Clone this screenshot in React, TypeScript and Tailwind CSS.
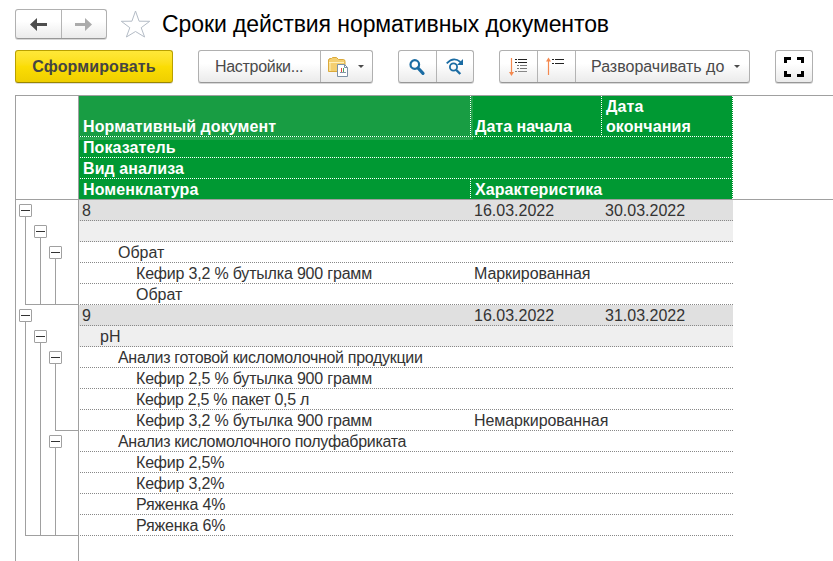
import type { ReactNode } from "react";

type Cell = "box" | "line" | "none";

interface ReportRow {
  text: string;
  level: number;
  spacing?: string;
  start?: string;
  end?: string;
  tree: [Cell, Cell, Cell];
  close?: number;
}

const TIGHT = "tracking-[-0.19px]";
const TIGHTER = "tracking-[-0.3px]";

const ROWS: ReportRow[] = [
  { text: "8", level: 0, start: "16.03.2022", end: "30.03.2022", tree: ["box", "none", "none"] },
  { text: "", level: 1, tree: ["line", "box", "none"] },
  { text: "Обрат", level: 2, tree: ["line", "line", "box"] },
  { text: "Кефир 3,2 % бутылка 900 грамм", spacing: TIGHT, level: 3, start: "Маркированная", tree: ["line", "line", "line"] },
  { text: "Обрат", level: 3, tree: ["line", "line", "line"], close: 0 },
  { text: "9", level: 0, start: "16.03.2022", end: "31.03.2022", tree: ["box", "none", "none"] },
  { text: "pH", level: 1, tree: ["line", "box", "none"] },
  { text: "Анализ готовой кисломолочной продукции", spacing: TIGHTER, level: 2, tree: ["line", "line", "box"] },
  { text: "Кефир 2,5 % бутылка 900 грамм", spacing: TIGHT, level: 3, tree: ["line", "line", "line"] },
  { text: "Кефир 2,5 % пакет 0,5 л", spacing: TIGHTER, level: 3, tree: ["line", "line", "line"] },
  { text: "Кефир 3,2 % бутылка 900 грамм", spacing: TIGHT, level: 3, start: "Немаркированная", tree: ["line", "line", "line"], close: 2 },
  { text: "Анализ кисломолочного полуфабриката", spacing: TIGHTER, level: 2, tree: ["line", "line", "box"] },
  { text: "Кефир 2,5%", spacing: TIGHT, level: 3, tree: ["line", "line", "line"] },
  { text: "Кефир 3,2%", spacing: TIGHT, level: 3, tree: ["line", "line", "line"] },
  { text: "Ряженка 4%", spacing: TIGHT, level: 3, tree: ["line", "line", "line"] },
  { text: "Ряженка 6%", spacing: TIGHT, level: 3, tree: ["line", "line", "line"], close: 0 },
];

const INDENT = ["pl-[3px]", "pl-[21px]", "pl-[39px]", "pl-[57px]"];
const FILL = ["bg-[#e0e0e0]", "bg-[#efefef]", "bg-white", "bg-white"];
const CLOSE = ["ml-[9px]", "ml-[24px]", "ml-[39px]"];

const GRAY_DOTS = "h-px shrink-0 ml-px bg-[repeating-linear-gradient(90deg,#888_0px_1px,transparent_1px_2px)]";
const WHITE_DOTS = "h-px shrink-0 ml-px bg-[repeating-linear-gradient(90deg,#fff_0px_1px,transparent_1px_2px)]";
const WHITE_DOTS_V = "w-px shrink-0 bg-[repeating-linear-gradient(180deg,#fff_0px_1px,transparent_1px_2px)]";

function Group({ className, children }: { className: string; children: ReactNode }) {
  return (
    <div
      className={`flex shrink-0 divide-x divide-[#b4b4b4] rounded-[3px] border border-[#b0b0b0] border-b-[#979797] bg-linear-to-b from-white from-40% to-[#ebebeb] shadow-[0_1px_0_#d8d8d8] ${className}`}
    >
      {children}
    </div>
  );
}

function Tool({ className, children }: { className: string; children?: ReactNode }) {
  return <button className={`flex shrink-0 items-center ${className}`}>{children}</button>;
}

function Caret() {
  return (
    <svg className="shrink-0" width="6" height="3" viewBox="0 0 6 3">
      <path d="M0 0h6L3 3z" fill="#4a4a4a" />
    </svg>
  );
}

function Toolbar() {
  return (
    <div className="flex h-[33px] pl-[15px]">
      <button className="h-[33px] w-[158px] shrink-0 rounded-[3px] border border-[#b9a000] border-b-[#9a8600] bg-linear-to-b from-[#ffe838] via-[#fbdd04] to-[#efcf00] text-center text-[16px] leading-[31px] font-bold tracking-[0.12px] text-[#444] shadow-[0_1px_0_#ddd]">
        Сформировать
      </button>
      <Group className="ml-[25px] w-[175px]">
        <Tool className="w-[122px] pl-4 text-[16px] tracking-[-0.3px] text-[#4a4a4a]">Настройки...</Tool>
        <Tool className="flex-1 gap-[8px] pl-[7px]">
          <svg width="22" height="23" viewBox="0 -1 22 23">
            <path d="M.5 15.500v-12h1v-1h2l1-1h4l2 2h5q1.500 0 1.500 2v10z" fill="#f4cf70" stroke="#dba93a" />
            <path d="M1 6.500h15" stroke="#fff0bd" />
            <path d="M2 7v8" stroke="#fae194" strokeWidth="2" />
            <path d="M9.500 8.500h7l3 3v9h-10z" fill="#fff" stroke="#7c91a5" />
            <path d="M16.500 8.500v3h3" fill="none" stroke="#7c91a5" />
            <path d="M12 16.500h6" stroke="#8496a8" />
            <path d="M13.500 12v4" stroke="#e04c42" />
            <path d="M15.500 12v4" stroke="#52a55c" />
          </svg>
          <Caret />
        </Tool>
      </Group>
      <Group className="ml-[25px] w-[76px]">
        <Tool className="w-[38px] pl-[10px]">
          <svg width="17" height="19" viewBox="0 -2 17 19" fill="none" stroke="#1b6ca3">
            <circle cx="5.800" cy="5.500" r="4.300" strokeWidth="2.200" />
            <path d="M9 9l5 5.300" strokeWidth="3.200" strokeLinecap="round" />
          </svg>
        </Tool>
        <Tool className="flex-1 pl-[9px]">
          <svg width="18" height="19" viewBox="0 -1 18 19" fill="none" stroke="#1b6ca3">
            <path d="M.7 5.300Q7.500-2 14.500 4" strokeWidth="1.700" />
            <path d="M17 1v6h-6z" fill="#1b6ca3" stroke="none" />
            <circle cx="7.500" cy="9" r="3.600" strokeWidth="1.800" />
            <path d="M10.300 12l4 4" strokeWidth="2.400" />
          </svg>
        </Tool>
      </Group>
      <Group className="ml-[25px] w-[251px]">
        <Tool className="w-[38px] pl-[9px]">
          <svg width="20" height="21" viewBox="0 -1 20 21">
            <path d="M2.500 1v15" stroke="#f4894f" strokeWidth="1.200" />
            <path d="M0 15h5l-2.500 4z" fill="#f4894f" />
            <path d="M6 2.500h2M9 2.500h9M6 5.500h2M9 5.500h9" stroke="#222" />
            <path d="M8 8.500h2M11 8.500h7M8 11.500h2M11 11.500h7" stroke="#777" />
            <path d="M6 14.500h2M9 14.500h9" stroke="#888" />
          </svg>
        </Tool>
        <Tool className="w-[38px] pl-[8px]">
          <svg width="20" height="21" viewBox="0 -1 20 21">
            <path d="M2.500 3v15" stroke="#f4894f" strokeWidth="1.200" />
            <path d="M0 4.500h5L2.500.5z" fill="#f4894f" />
            <path d="M6 2.500h2M9 2.500h9M6 6.500h2M9 6.500h9" stroke="#222" />
          </svg>
        </Tool>
        <Tool className="flex-1 gap-[10px] pl-[15px] text-[16px] whitespace-nowrap text-[#4a4a4a]">
          <span>Разворачивать до</span>
          <Caret />
        </Tool>
      </Group>
      <Group className="ml-[25px] w-[38px]">
        <Tool className="flex-1 pl-[8px]">
          <svg width="20" height="21" viewBox="0 -1 20 21" fill="none" stroke="#000" strokeWidth="3">
            <path d="M1.500 6v-4.500h5.500M13 1.500h5.500v4.500M18.500 14v4.500h-5.500M7 18.500h-5.500v-4.500" />
          </svg>
        </Tool>
      </Group>
    </div>
  );
}

function TitleBar() {
  return (
    <div className="flex h-[50px] pt-[9px] pl-[15px]">
      <Group className="h-[30px] w-[92px]">
        <Tool className="w-[46px] pl-[14px]">
          <svg width="18" height="14" viewBox="0 0 18 14">
            <path d="M0 7.500l7-6.500V6h10v3H7v5z" fill="#4d4d4d" />
          </svg>
        </Tool>
        <Tool className="flex-1 pl-[12px]">
          <svg width="18" height="14" viewBox="0 0 18 14">
            <path d="M18 7.500l-7-6.500V6H1v3h10v5z" fill="#ababab" />
          </svg>
        </Tool>
      </Group>
      <svg className="ml-[13px] shrink-0" width="32" height="30" viewBox="0 0 32 30">
        <path
          d="M15.500 2l3.600 10.200 10.600.1-8.500 6.400 3.400 9.300-9.100-5.500-9.100 5.500 3.400-9.300L1.300 12.300l10.600-.1z"
          fill="#fff"
          stroke="#b4bcc6"
        />
      </svg>
      <h1 className="ml-[10px] text-[23px] leading-[30px] tracking-[-0.08px] whitespace-nowrap text-black">
        Сроки действия нормативных документов
      </h1>
    </div>
  );
}

function HeaderLine({ text, second }: { text: string; second?: string }) {
  return (
    <div className="flex h-5">
      <div className="w-[391px] pl-1 leading-[21px]">{text}</div>
      {second && (
        <>
          <div className={WHITE_DOTS_V} />
          <div className="pl-[4px] leading-[21px]">{second}</div>
        </>
      )}
    </div>
  );
}

function ReportHeader() {
  return (
    <div className="flex h-[105px] border-y border-[#a0a0a0]">
      <div className="w-[62px] shrink-0" />
      <div className="w-px shrink-0 bg-[#a0a0a0]" />
      <div className="flex w-[654px] shrink-0 bg-[#009933] text-[16px] font-bold tracking-[0.09px] text-white">
        <div className="flex w-[653px] flex-col">
          <div className="flex h-10 items-stretch">
            <div className="flex w-[391px] items-end bg-[#189d43] pl-1 leading-[19px]">Нормативный документ</div>
            <div className={WHITE_DOTS_V} />
            <div className="flex w-[130px] items-end border-l-2 border-[#25a44d] pl-[2px] leading-[19px] tracking-normal">
              Дата начала
            </div>
            <div className={WHITE_DOTS_V} />
            <div className="pt-px pl-1 leading-5">
              Дата
              <br />
              окончания
            </div>
          </div>
          <div className={WHITE_DOTS} />
          <div className="h-5 bg-[linear-gradient(#25a44d,#25a44d)] bg-[length:394px_3px] bg-no-repeat">
            <HeaderLine text="Показатель" />
          </div>
          <div className={WHITE_DOTS} />
          <HeaderLine text="Вид анализа" />
          <div className={WHITE_DOTS} />
          <HeaderLine text="Номенклатура" second="Характеристика" />
        </div>
        <div className={WHITE_DOTS_V} />
      </div>
    </div>
  );
}

function TreeCell({ kind }: { kind: Cell }) {
  return (
    <div className="flex h-full w-[15px] flex-col items-center">
      {kind === "box" && (
        <>
          <div className="mt-1 flex h-[13px] w-[13px] shrink-0 items-center justify-center rounded-[1px] border border-[#a0a0a0] bg-white">
            <div className="h-px w-[9px] bg-[#333]" />
          </div>
          <div className="w-px flex-1 bg-[#a0a0a0]" />
        </>
      )}
      {kind === "line" && <div className="w-px flex-1 bg-[#a0a0a0]" />}
    </div>
  );
}

function Row({ row }: { row: ReportRow }) {
  return (
    <div className="flex h-[21px]">
      <div className="flex w-[62px] shrink-0 flex-col">
        <div className="flex h-5 pl-[2px]">
          {row.tree.map((kind, i) => (
            <TreeCell key={i} kind={kind} />
          ))}
        </div>
        {row.close === undefined ? (
          <div className="flex h-px pl-[2px]">
            {row.tree.map((kind, i) => (
              <div key={i} className="flex w-[15px] justify-center">
                {kind !== "none" && <div className="w-px bg-[#a0a0a0]" />}
              </div>
            ))}
          </div>
        ) : row.close === 2 ? (
          <div className="flex h-px pl-[9px]">
            <div className="w-px bg-[#a0a0a0]" />
            <div className="ml-[14px] w-px bg-[#a0a0a0]" />
            <div className="ml-[14px] flex-1 bg-[#a0a0a0]" />
          </div>
        ) : (
          <div className={`h-px bg-[#a0a0a0] ${CLOSE[row.close]}`} />
        )}
      </div>
      <div className="w-px shrink-0 bg-[#a0a0a0]" />
      <div className={`w-[654px] shrink-0 text-[16px] text-[#333] ${FILL[row.level]}`}>
        <div className="flex h-5 leading-[21px] whitespace-nowrap">
          <div className={`w-[395px] ${INDENT[row.level]} ${row.spacing ?? ""}`}>{row.text}</div>
          <div className={row.end ? "w-[131px]" : "w-[131px] tracking-[-0.08px]"}>{row.start}</div>
          <div>{row.end}</div>
        </div>
        <div className={GRAY_DOTS} />
      </div>
    </div>
  );
}

export default function App() {
  return (
    <div className="flex h-[561px] w-[833px] flex-col overflow-hidden bg-white font-['Liberation_Sans',Arial,sans-serif]">
      <TitleBar />
      <Toolbar />
      <div className="mt-3 ml-[15px] flex flex-1 flex-col border-l border-[#a0a0a0]">
        <ReportHeader />
        {ROWS.map((row, i) => (
          <Row key={i} row={row} />
        ))}
        <div className="ml-[62px] flex-1 border-l border-[#a0a0a0]" />
      </div>
    </div>
  );
}
